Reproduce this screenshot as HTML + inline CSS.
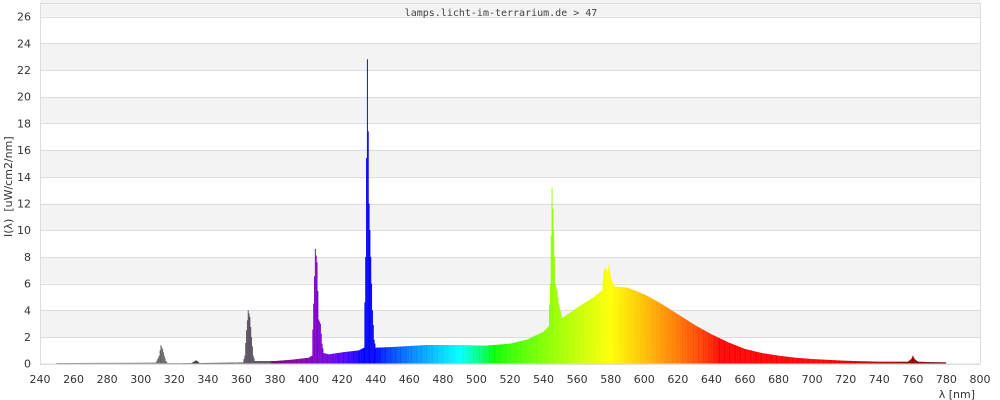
<!DOCTYPE html>
<html><head><meta charset="utf-8"><style>
body{margin:0;background:#fff;width:1000px;height:400px;overflow:hidden}
svg{display:block}
text{font-family:"DejaVu Sans","Liberation Sans",sans-serif;font-size:11px;fill:#333}
</style></head><body>
<svg id="s" width="1000" height="400" xmlns="http://www.w3.org/2000/svg">
<rect x="40" y="3" width="940" height="361" fill="#fff"/>
<g id="bands"></g>
<g id="bars"></g>
<rect x="40.5" y="3.5" width="940" height="360.5" fill="none" stroke="#ddd"/>
<text x="501" y="16" text-anchor="middle" style="font-family:'DejaVu Sans Mono','Liberation Mono',monospace;font-size:10px;fill:#444">lamps.licht-im-terrarium.de &gt; 47</text>
<g id="labels"></g>
<text x="975" y="398" text-anchor="end">λ [nm]</text>
<text transform="translate(12,237) rotate(-90)" text-anchor="start">I(λ)&#160; [uW/cm2/nm]</text>
</svg>
<script>
var NS="http://www.w3.org/2000/svg";
function el(t,a,p){var e=document.createElementNS(NS,t);for(var k in a)e.setAttribute(k,a[k]);document.getElementById(p).appendChild(e);return e;}
function Y(v){return 363.7-v*13.35;}
function X(n){return 40+(n-240)*940/560;}
for(var v=0;v<=26;v+=2){
 if(v%4==2) el("rect",{x:40,y:Y(v+2),width:940,height:13.35*2,fill:"#f3f3f3"},"bands");
 el("rect",{x:40,y:Math.round(Y(v)),width:940,height:1,fill:"#ddd"},"bands");
 var t=el("text",{x:31,y:Y(v)+4,"text-anchor":"end"},"labels");t.textContent=v;
}
for(var n=240;n<=800;n+=20){var t=el("text",{x:X(n),y:383,"text-anchor":"middle"},"labels");t.textContent=n;}
var pts=[[250,0.05],[300,0.07],[309,0.08],[311,0.6],[312,1.4],[313,1.1],[314,0.6],[315,0.2],[316,0.05],[330,0.03],[333,0.25],[335,0.05],[355,0.08],[361,0.1],[362,0.6],[363,2.5],[364,4.0],[365,3.5],[366,2.0],[367,0.6],[368,0.2],[380,0.2],[390,0.3],[400,0.45],[402,0.6],[403,4.5],[404,8.6],[405,7.6],[406,3.3],[407,3.0],[408,1.5],[409,0.8],[412,0.7],[420,0.85],[430,1.0],[433,1.2],[434,8],[435,22.8],[436,12],[437,8],[438,4],[439,1.8],[440,1.2],[450,1.25],[470,1.4],[490,1.4],[505,1.35],[520,1.5],[530,1.8],[540,2.4],[543,2.8],[544,6],[545,13.2],[546,10],[547,6],[548,5.5],[549,4.5],[551,3.4],[560,4.2],[570,5.0],[575,5.5],[576,7.0],[577,7.2],[578,6.8],[579,7.5],[580,6.5],[582,5.8],[590,5.7],[600,5.2],[610,4.5],[620,3.7],[630,2.9],[640,2.2],[650,1.6],[660,1.1],[670,0.8],[680,0.6],[690,0.45],[700,0.35],[720,0.22],[740,0.15],[757,0.15],[759,0.35],[760,0.6],[761,0.35],[763,0.15],[770,0.12],[780,0.1]];
function I(n){for(var i=0;i<pts.length-1;i++){if(n>=pts[i][0]&&n<=pts[i+1][0]){var f=(n-pts[i][0])/(pts[i+1][0]-pts[i][0]);return pts[i][1]+f*(pts[i+1][1]-pts[i][1]);}}return 0;}
function col(w){
 if(w<378){return w>355?"#5a5060":(w>325?"#333":"#666");}
 var r=0,g=0,b=0;
 if(w<432){r=Math.min(1,(432-w)/50);b=1;}else if(w<440){b=1;}else if(w<490){g=(w-440)/50;b=1;}else if(w<510){g=1;b=-(w-510)/20;}
 else if(w<580){r=(w-510)/70;g=1;}else if(w<645){r=1;g=-(w-645)/65;}else{r=1;}
 var f=1;if(w<420)f=0.35+0.65*(w-380)/40;else if(w>700)f=0.3+0.7*(780-w)/80;
 function c(x){return Math.round(255*Math.pow(x*f,0.8));}
 return "rgb("+c(r)+","+c(g)+","+c(b)+")";
}
for(var n=250;n<780;n+=0.5){var v=I(n);var h=v*13.35;if(h<0.6)h=0.6;
 el("rect",{x:X(n)-0.4,y:363.7-h,width:0.95,height:h,fill:col(n)},"bars");}
</script>
</body></html>
